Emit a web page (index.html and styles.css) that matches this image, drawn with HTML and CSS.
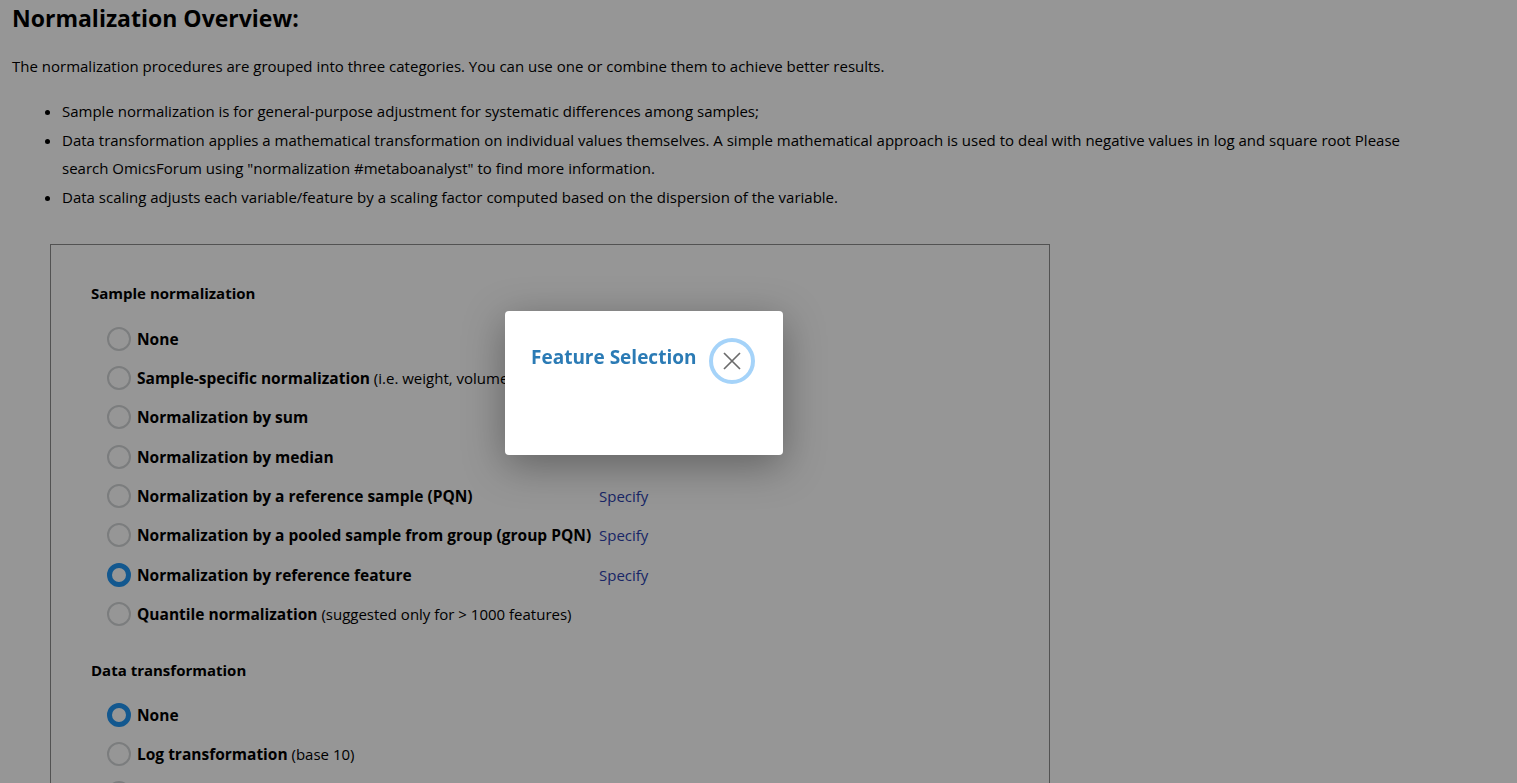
FILE: index.html
```html
<!DOCTYPE html>
<html lang="en">
<head>
  <meta charset="UTF-8">
  <title>Normalization</title>
  <link rel="stylesheet" href="styles.css">
</head>
<body>
  <div class="page">
    <h2 class="title">Normalization Overview:</h2>
    <p class="intro">The normalization procedures are grouped into three categories. You can use one or combine them to achieve better results.</p>
    <ul class="notes">
      <li>Sample normalization is for general-purpose adjustment for systematic differences among samples;</li>
      <li>Data transformation applies a mathematical transformation on individual values themselves. A simple mathematical approach is used to deal with negative values in log and square root Please search OmicsForum using "normalization #metaboanalyst" to find more information.</li>
      <li>Data scaling adjusts each variable/feature by a scaling factor computed based on the dispersion of the variable.</li>
    </ul>

    <form class="panel">
      <h4 class="group-title">Sample normalization</h4>
      <div class="option"><input type="radio" name="rownorm" id="r1"><label for="r1"><b>None</b></label></div>
      <div class="option"><input type="radio" name="rownorm" id="r2"><label for="r2"><b>Sample-specific normalization</b> (i.e. weight, volume)</label></div>
      <div class="option"><input type="radio" name="rownorm" id="r3"><label for="r3"><b>Normalization by sum</b></label></div>
      <div class="option"><input type="radio" name="rownorm" id="r4"><label for="r4"><b>Normalization by median</b></label></div>
      <div class="option"><input type="radio" name="rownorm" id="r5"><label for="r5" class="wide"><b>Normalization by a reference sample (PQN)</b></label><a href="#" class="specify">Specify</a></div>
      <div class="option"><input type="radio" name="rownorm" id="r6"><label for="r6" class="wide"><b>Normalization by a pooled sample from group (group PQN)</b></label><a href="#" class="specify">Specify</a></div>
      <div class="option"><input type="radio" name="rownorm" id="r7" checked><label for="r7" class="wide"><b>Normalization by reference feature</b></label><a href="#" class="specify">Specify</a></div>
      <div class="option"><input type="radio" name="rownorm" id="r8"><label for="r8"><b>Quantile normalization</b> (suggested only for &gt; 1000 features)</label></div>

      <h4 class="group-title second">Data transformation</h4>
      <div class="option"><input type="radio" name="trans" id="t1" checked><label for="t1"><b>None</b></label></div>
      <div class="option"><input type="radio" name="trans" id="t2"><label for="t2"><b>Log transformation</b> (base 10)</label></div>
      <div class="option"><input type="radio" name="trans" id="t3"><label for="t3"><b>Square root transformation</b> (square root of data values)</label></div>
    </form>
  </div>

  <div class="mask"></div>

  <div class="dialog">
    <div class="dialog-head">
      <span class="dialog-title">Feature Selection</span>
      <button type="button" class="dialog-close" aria-label="Close">
        <svg width="20" height="20" viewBox="0 0 20 20"><path d="M2 2 L18 18 M18 2 L2 18" stroke="#6b6b6b" stroke-width="1.7" fill="none"/></svg>
      </button>
    </div>
  </div>
</body>
</html>
```

FILE: styles.css
```css
html, body {
    margin: 0;
    padding: 0;
    background: #fff;
    color: #000;
    font-family: "Open Sans", "Noto Sans", sans-serif;
    font-size: 15px;
}

.page {
    padding: 0 12px;
    height: 783px;
    overflow: hidden;
}

/* 상단 설명 */
.title {
    font-size: 23px;
    font-weight: bold;
    margin: 4px 0 0;
    line-height: 28px;
}

.intro {
    margin: 24px 0 21px;
    line-height: 20px;
}

.notes {
    margin: 0;
    padding-left: 50px;
    max-width: 1350px;
    line-height: 28.7px;
}

/* 옵션 패널 */
.panel {
    width: 918px;
    margin: 32px 0 0 38px;
    border: 1px solid #8c8c8c;
    padding: 35px 40px 0;
}

.group-title {
    font-size: 15px;
    font-weight: bold;
    margin: 0 0 13px;
    line-height: 26px;
}

.group-title.second {
    margin-top: 23px;
    margin-bottom: 12px;
}

.option {
    display: flex;
    align-items: center;
    height: 39.4px;
    padding-left: 16px;
}

.option input {
    appearance: none;
    width: 24px;
    height: 24px;
    margin: 0 6px 0 0;
    border: 2px solid #d2d4d6;
    border-radius: 50%;
    background: #fff;
    box-sizing: border-box;
}

.option input:checked {
    border: 5px solid #2196f3;
}

.option label {
    white-space: nowrap;
}

.option label b {
    font-size: 15.5px;
}

.option label.wide {
    width: 462px;
}

.specify {
    color: #2c3fae;
    text-decoration: none;
}

/* 모달 */
.mask {
    position: fixed;
    inset: 0;
    background: rgba(0, 0, 0, 0.41);
}

.dialog {
    position: absolute;
    left: 505px;
    top: 311px;
    width: 278px;
    height: 144px;
    background: #fff;
    border-radius: 4px;
    box-shadow: 0 10px 40px rgba(0, 0, 0, 0.35);
    box-sizing: border-box;
    padding: 27px 26px 0;
}

.dialog-head {
    display: flex;
    align-items: flex-start;
    gap: 13px;
}

.dialog-title {
    color: #2b7bb5;
    font-size: 19px;
    font-weight: bold;
    white-space: nowrap;
    margin-top: 6px;
}

.dialog-close {
    flex: none;
    width: 46px;
    height: 46px;
    border-radius: 50%;
    border: 4px solid #a5d3f9;
    background: #fff;
    display: flex;
    align-items: center;
    justify-content: center;
    padding: 0;
}
```
